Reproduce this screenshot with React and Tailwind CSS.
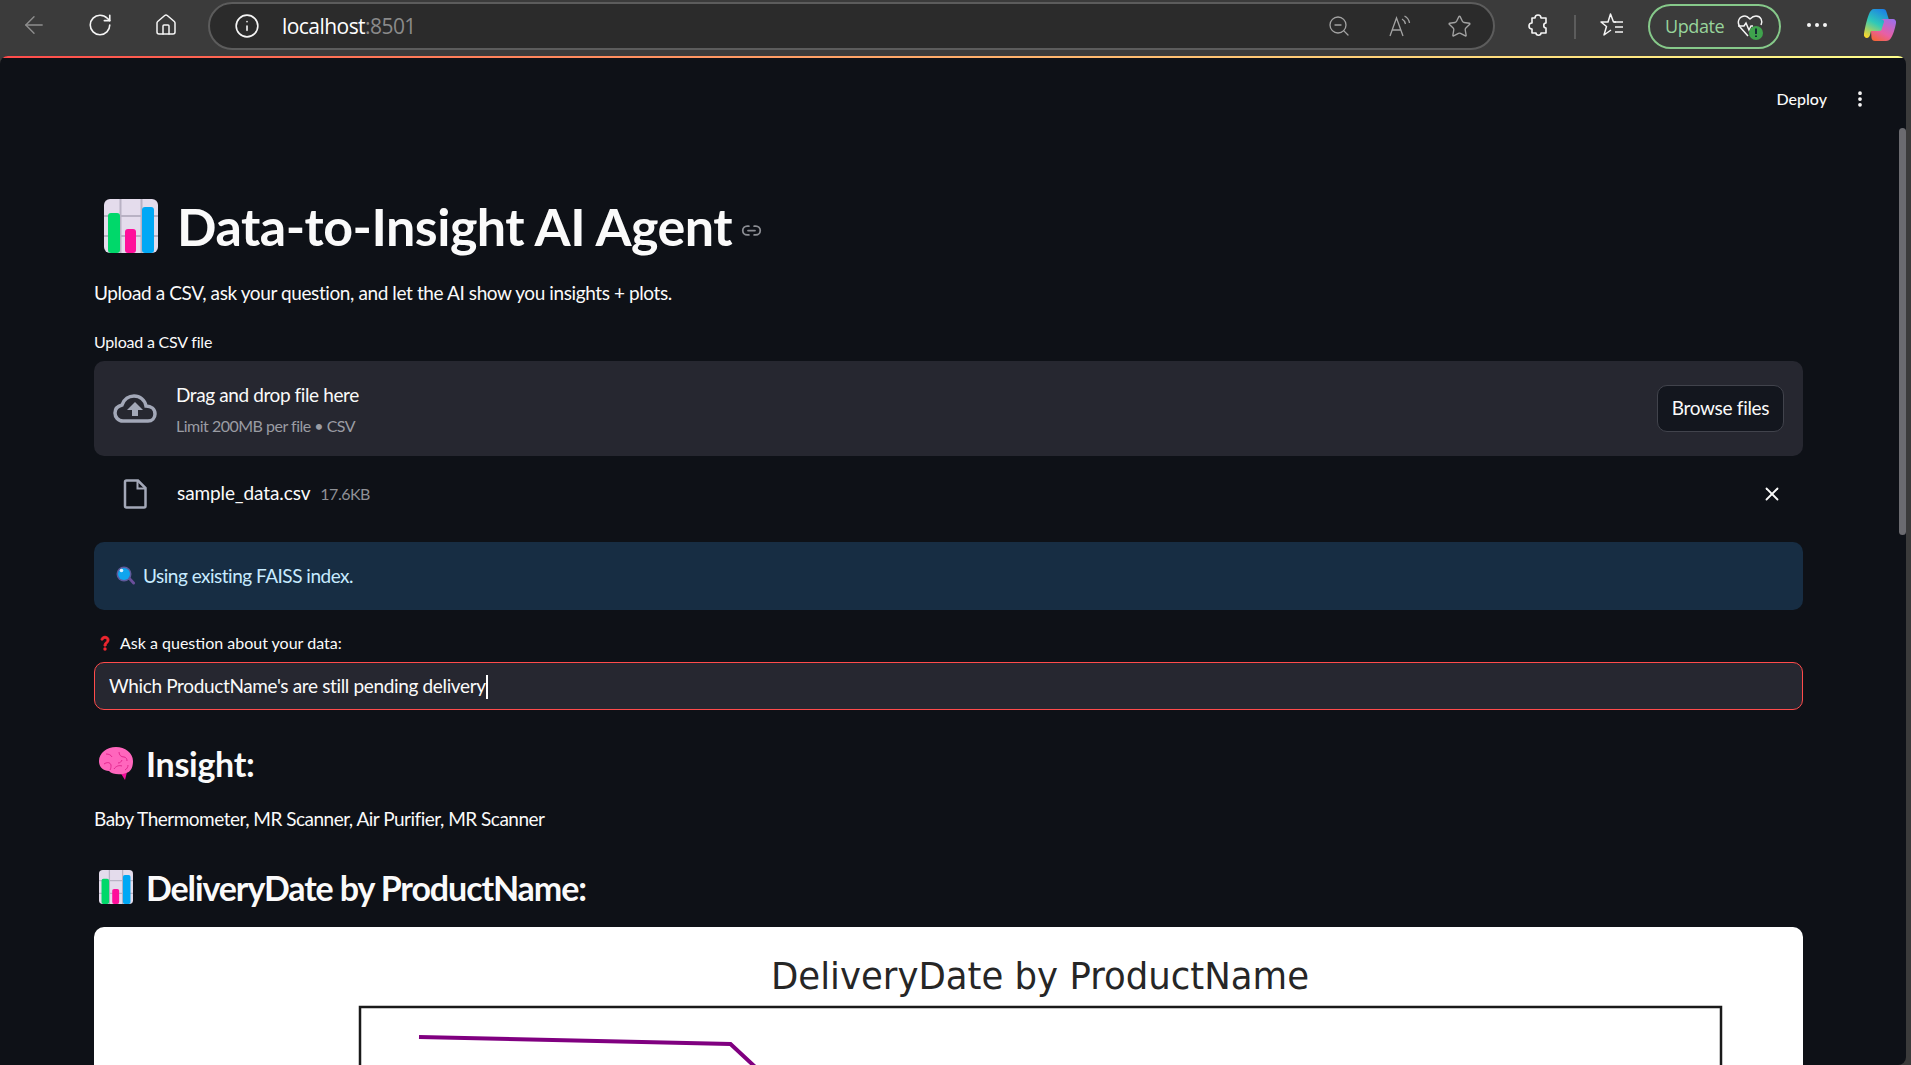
import React from "react";
import { ArrowLeft, RotateCw, House, Info, ZoomOut, Star, Link2, X, EllipsisVertical } from "lucide-react";

function BarChartEmoji({ className }) {
  return (
    <svg viewBox="0 0 54 54" className={className}>
      <rect x="0" y="0" width="54" height="54" rx="6" fill="#e4dcec" />
      <path d="M16.500 0V54M37.500 0V54M0 17H54M0 37H54" stroke="#b9b2c4" strokeWidth="2" />
      <rect x="4" y="14" width="12" height="40" rx="3" fill="#00d86a" />
      <rect x="21" y="30" width="11" height="24" rx="3" fill="#ff0f9b" />
      <rect x="38" y="8" width="12" height="46" rx="3" fill="#00a8f5" />
    </svg>
  );
}

function Brain() {
  return (
    <svg viewBox="0 0 36 36" className="w-[36px] h-[36px] shrink-0">
      <path d="M22 27h7l-2 8z" fill="#f0109a" />
      <path d="M1 16C1 8 9 2 18 2c9 0 17 6 17 14 0 6-2 11-7 12-4 2-14 2-17-2-6 0-10-4-10-10z" fill="#ff66bd" />
      <path d="M8 9c3 0 5 1 6 3M6 19c3-2 6-2 7 1 0 2 0 3-1 5M16 24c2-3 5-4 8-3M21 7c0 3 2 5 5 5 2 0 3 2 3 4M24 15c-1 2-2 3-4 3M30 20c0 2-1 4-3 5" stroke="#e3278f" strokeWidth="1" fill="none" />
    </svg>
  );
}

function Magnifier() {
  return (
    <svg viewBox="0 0 20 20" className="w-[20px] h-[20px] shrink-0">
      <path d="M12 13l2-2 5 5.500c.6 1-.8 2.500-2 2z" fill="#6b4f9b" />
      <circle cx="8" cy="8" r="7.500" fill="#5f5a9c" />
      <circle cx="8" cy="8" r="6" fill="#0fa5ee" />
      <circle cx="5.500" cy="4.500" r="1.800" fill="#d9f3ff" />
    </svg>
  );
}

function QuestionMark() {
  return (
    <svg viewBox="0 0 12 16" className="w-[12px] h-[16px] shrink-0">
      <path d="M2 5c0-5 8-5 8 0 0 3-3 3-3 6H5c0-4 3-4 3-6 0-2-4-2-4 0z" fill="#f0262f" stroke="#f0262f" strokeWidth="1" />
      <circle cx="6" cy="14" r="1.700" fill="#f0262f" />
    </svg>
  );
}

function ReadAloud() {
  return (
    <svg viewBox="0 0 24 24" className="w-[24px] h-[24px]" fill="none" stroke="#a3a3a3" strokeWidth="1.300">
      <path d="M3 22L9.500 4 16 22M5.300 16h8.400" />
      <path d="M15 5c2 1 3 3 3.500 5M17.500 2c3 1.500 4.500 4 5 7" />
    </svg>
  );
}

function Puzzle() {
  return (
    <svg viewBox="0 0 24 24" className="w-[24px] h-[24px]" fill="none" stroke="#f5f5f5" strokeWidth="1.600" strokeLinejoin="round">
      <path d="M9 5c0-4 6-4 6 0h5v5c-3 0-3 5 0 5v5h-5c0 3-5 3-5 0H6v-4c-4 0-4-6 0-6V5z" />
    </svg>
  );
}

function Favorites() {
  return (
    <svg viewBox="0 0 26 26" className="w-[26px] h-[26px]" fill="none" stroke="#f5f5f5" strokeWidth="1.500" strokeLinejoin="round">
      <path d="M17 10h-2.500L11.500 2 9 10H2l5.500 4.500L5 23l7-5" />
      <path d="M15 10h9M16 15h8M16 20h8" />
    </svg>
  );
}

function HeartAlert() {
  return (
    <svg viewBox="0 0 28 28" className="w-[28px] h-[28px]">
      <path d="M12 23L4 14C0 8 4 3 9 3c2 0 3 1 5 3 2-2 4-3 6-3 5 0 7 5 5 9" fill="none" stroke="#f5f5f5" strokeWidth="1.500" />
      <path d="M2 13h6l2-3 3 7 2-4h2" fill="none" stroke="#f5f5f5" strokeWidth="1.500" />
      <circle cx="20" cy="20" r="7" fill="#3fa34d" />
      <path d="M20 15.500v5.500M20 22.500v1.500" stroke="#123" strokeWidth="1.800" />
    </svg>
  );
}

function Copilot() {
  return (
    <svg viewBox="0 0 34 34" className="w-[34px] h-[34px]">
      <defs>
        <linearGradient id="cpA" x1="0.7" y1="0" x2="0.2" y2="1">
          <stop offset="0" stopColor="#1b7fe8" />
          <stop offset="0.5" stopColor="#2fc9b8" />
          <stop offset="1" stopColor="#f6d62e" />
        </linearGradient>
        <linearGradient id="cpB" x1="0.8" y1="0" x2="0.2" y2="1">
          <stop offset="0" stopColor="#a06ee8" />
          <stop offset="0.6" stopColor="#e85fa5" />
          <stop offset="1" stopColor="#f4653a" />
        </linearGradient>
      </defs>
      <path d="M11 1h9c2 0 3 1 3.500 3l5 16c.5 2-1 3-2.500 3H8l-1 4c-.5 2-2 3-3 3-2 0-3.500-2-3-4 1-7 3-15 5-20 1-3 3-5 5-5z" fill="url(#cpA)" />
      <path d="M17 11h13c2 0 3.500 2 3 4-1 6-3 12-5 15-1 2-3 3-5 3H12c-2 0-3-1-3.500-3L8 23h8c2 0 3-1 3-3l2-6c.5-2-2-3-4-3z" fill="url(#cpB)" />
    </svg>
  );
}

function BrowserBar() {
  return (
    <div className="h-[56px] shrink-0 flex items-start bg-[#3b3b3b]">
      <div className="w-[68px] h-[50px] flex items-center justify-center">
        <ArrowLeft size={28} strokeWidth={1.200} className="text-[#8e8e8e]" />
      </div>
      <div className="w-[64px] h-[50px] flex items-center justify-center">
        <RotateCw size={26} strokeWidth={1.500} className="text-[#f5f5f5]" />
      </div>
      <div className="w-[68px] h-[50px] flex items-center justify-center">
        <House size={24} strokeWidth={1.500} className="text-[#f5f5f5]" />
      </div>
      <div className="ml-[8px] mt-[2px] w-[1287px] h-[48px] rounded-full border-2 border-[#5c5c5c] bg-[#2b2b2b] flex items-center">
        <Info size={26} strokeWidth={1.500} className="ml-[24px] text-[#f5f5f5]" />
        <div className="ml-[22px] mt-[1px] text-[21px] tracking-[-0.55px] text-white font-['Open_Sans',sans-serif]">
          localhost<span className="text-[#8a8a8a]">:8501</span>
        </div>
        <div className="ml-auto flex items-center gap-[36px] pr-[21px]">
          <ZoomOut size={24} strokeWidth={1.300} className="text-[#a3a3a3]" />
          <ReadAloud />
          <Star size={25} strokeWidth={1.300} className="text-[#a3a3a3]" />
        </div>
      </div>
      <div className="ml-[31px] h-[50px] flex items-center">
        <Puzzle />
      </div>
      <div className="ml-[24px] mt-[15px] h-[24px] w-[2px] bg-[#5c5c5c]" />
      <div className="ml-[23px] h-[50px] flex items-center">
        <Favorites />
      </div>
      <div className="ml-[23px] mt-[4px] w-[133px] h-[45px] rounded-full border-2 border-[#86c98a] flex items-center pl-[15px]">
        <span className="text-[18px] tracking-[-0.4px] text-[#98d49b] font-['Open_Sans',sans-serif]">Update</span>
        <div className="ml-[12px]">
          <HeartAlert />
        </div>
      </div>
      <div className="ml-[26px] h-[50px] flex items-center gap-[4px]">
        <span className="w-[4px] h-[4px] rounded-full bg-[#f5f5f5]" />
        <span className="w-[4px] h-[4px] rounded-full bg-[#f5f5f5]" />
        <span className="w-[4px] h-[4px] rounded-full bg-[#f5f5f5]" />
      </div>
      <div className="ml-[36px] h-[50px] flex items-center">
        <Copilot />
      </div>
    </div>
  );
}

function DeliveryChart() {
  return (
    <svg viewBox="0 0 1709 160" className="block w-full h-[160px]">
      <text x="946" y="62" textAnchor="middle" textLength="538" lengthAdjust="spacingAndGlyphs" fontFamily="'DejaVu Sans', sans-serif" fontSize="38" fill="#262626">
        DeliveryDate by ProductName
      </text>
      <rect x="266" y="80" width="1361" height="200" fill="none" stroke="#1a1a1a" strokeWidth="2.500" />
      <path d="M325 110L636.500 117 700 176" fill="none" stroke="#800080" strokeWidth="4" />
    </svg>
  );
}

export default function App() {
  return (
    <div className="h-[1065px] w-full overflow-hidden flex flex-col bg-[#3b3b3b] font-['Lato','Noto_Sans',sans-serif] text-[#fafafa]">
      <BrowserBar />
      <div className="relative flex-1 mr-[5px] rounded-t-[8px] rounded-br-[8px] overflow-hidden bg-[#0e1117]">
        <div className="h-[2px] bg-gradient-to-r from-[#ff4b4b] to-[#ffff8c]" />
        <div className="h-[82px] flex items-center justify-end pr-[36px]">
          <span className="text-[16px] font-medium">Deploy</span>
          <EllipsisVertical size={20} strokeWidth={2.500} className="ml-[23px]" />
        </div>
        <main className="pl-[94px] pr-[103px]">
          <h1 className="mt-[56px] h-[60px] flex items-center text-[52px] font-bold tracking-[-0.5px]">
            <BarChartEmoji className="ml-[10px] mr-[19px] w-[54px] h-[54px]" />
            Data-to-Insight AI Agent
            <Link2 size={21} className="ml-[9px] mt-[8px] text-[#8b8d93]" />
          </h1>
          <p className="mt-[23px] h-[28px] leading-[28px] text-[19px] tracking-[-0.4px]">
            Upload a CSV, ask your question, and let the AI show you insights + plots.
          </p>
          <div className="mt-[24px] h-[22px] leading-[22px] text-[16px] tracking-[-0.2px]">Upload a CSV file</div>
          <section className="mt-[8px] h-[95px] rounded-[10px] bg-[#262730] flex items-center pr-[19px]">
            <svg viewBox="0 0 44 30" className="ml-[19px] w-[44px] h-[30px]">
              <path d="M35 27H10C5 27 2 23 2 19c0-4 3-7 7-8C11 5 16 2 21 2c6 0 11 4 12 10 5 0 9 3 9 8 0 4-3 7-7 7z" fill="none" stroke="#a3a8b8" strokeWidth="3.500" />
              <path d="M22 8l8 8h-5v6h-6v-6h-5z" fill="#a3a8b8" />
            </svg>
            <div className="ml-[19px]">
              <div className="h-[34px] leading-[34px] text-[19px] tracking-[-0.4px]">Drag and drop file here</div>
              <div className="mt-[1px] h-[26px] leading-[26px] text-[16px] tracking-[-0.5px] text-[#9a9ca3]">Limit 200MB per file • CSV</div>
            </div>
            <button className="ml-auto w-[127px] h-[47px] rounded-[10px] border border-[#41434c] bg-[#13161e] text-[19px] tracking-[-0.3px]">
              Browse files
            </button>
          </section>
          <section className="h-[76px] flex items-center pr-[20px]">
            <svg viewBox="0 0 24 30" className="ml-[29px] w-[24px] h-[30px]">
              <path d="M2 3c0-1 .5-1.500 1.500-1.500H15L22.500 9v18c0 1-.5 1.500-1.500 1.500H3.500C2.500 28.500 2 28 2 27z" fill="none" stroke="#a3a8b8" strokeWidth="2.500" />
              <path d="M14.500 2v7.500H22" fill="none" stroke="#a3a8b8" strokeWidth="2" />
            </svg>
            <span className="ml-[30px] mb-[2px] text-[19px] tracking-[-0.1px]">sample_data.csv</span>
            <span className="ml-[10px] mb-[1px] text-[16px] tracking-[-0.5px] text-[#8e9096]">17.6KB</span>
            <X size={22} strokeWidth={2} className="ml-auto" />
          </section>
          <section className="mt-[10px] h-[68px] rounded-[10px] bg-[#172d43] flex items-center pl-[22px] text-[19px] tracking-[-0.5px] text-[#c7ebff]">
            <Magnifier />
            <span className="ml-[7px]">Using existing FAISS index.</span>
          </section>
          <div className="mt-[22px] h-[22px] flex items-center pl-[5px] text-[16px]">
            <QuestionMark />
            <span className="ml-[9px]">Ask a question about your data:</span>
          </div>
          <div className="mt-[8px] h-[48px] rounded-[10px] border border-[#ff4b4b] bg-[#262730] flex items-center pl-[14px] pt-[1px] text-[19px] tracking-[-0.35px]">
            Which ProductName's are still pending delivery
            <span className="w-[2px] h-[24px] bg-white" />
          </div>
          <h3 className="mt-[31px] h-[44px] flex items-center pl-[4px] text-[34px] font-bold tracking-[-0.3px]">
            <Brain />
            <span className="ml-[12px]">Insight:</span>
          </h3>
          <p className="mt-[20px] h-[28px] leading-[28px] text-[19px] tracking-[-0.5px]">
            Baby Thermometer, MR Scanner, Air Purifier, MR Scanner
          </p>
          <h3 className="mt-[32px] h-[44px] flex items-center pl-[5px] text-[34px] font-bold tracking-[-1.1px]">
            <BarChartEmoji className="w-[34px] h-[34px]" />
            <span className="ml-[13px]">DeliveryDate by ProductName:</span>
          </h3>
          <div className="mt-[18px] rounded-t-[10px] bg-white">
            <DeliveryChart />
          </div>
        </main>
        <div className="absolute right-0 top-[72px] w-[7px] h-[407px] rounded-full bg-[#6b6b70]" />
      </div>
    </div>
  );
}
